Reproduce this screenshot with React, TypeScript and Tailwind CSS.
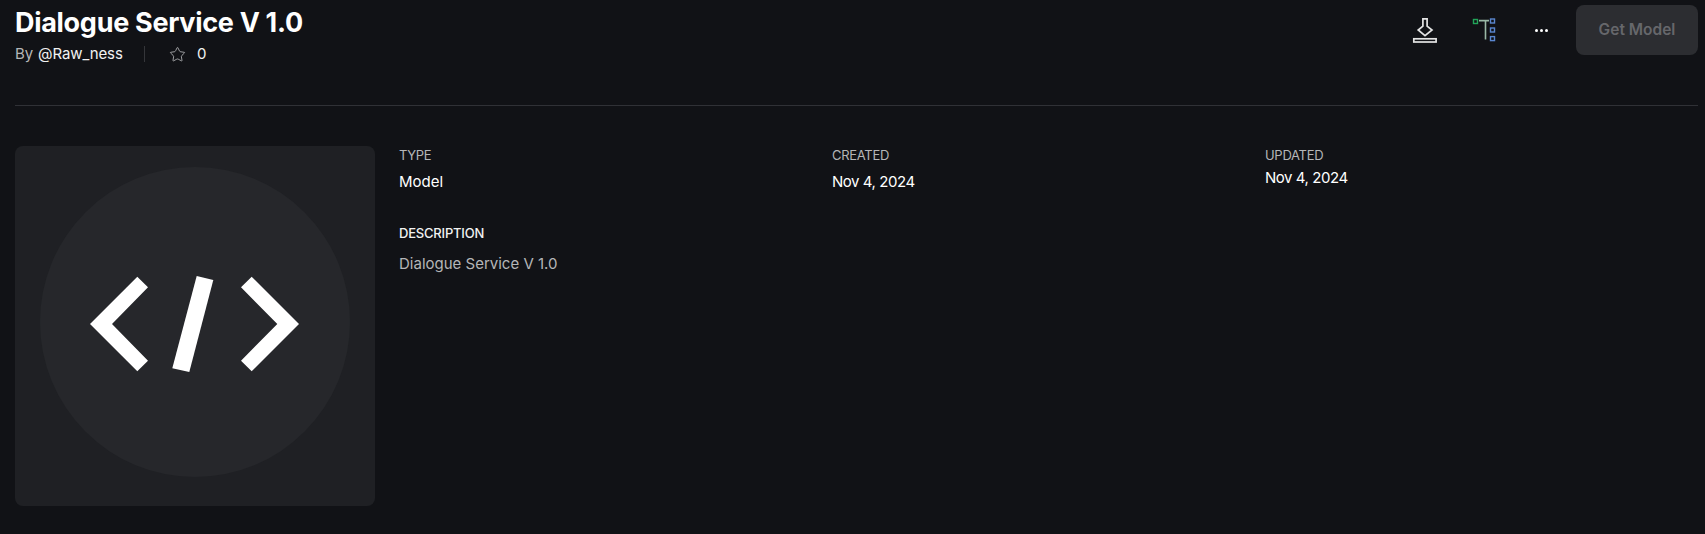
import { Star } from "lucide-react"

const meta = [
  { label: "TYPE", value: "Model", cls: "mt-[8px]" },
  { label: "CREATED", value: "Nov 4, 2024", cls: "mt-[8px] tracking-[-0.45px]" },
  { label: "UPDATED", value: "Nov 4, 2024", cls: "mt-[4px] tracking-[-0.45px]" },
]

function DownloadIcon() {
  return (
    <svg width="26" height="26" viewBox="0 0 26 26" fill="none" stroke="#e4e4e4" strokeWidth="1.7">
      <path d="M10.9 1.9h4.2v7.2L20 13 13 18.6 6.2 13l4.7-3.9z" />
      <rect x="1.8" y="21.8" width="22.3" height="3.2" />
    </svg>
  )
}

function TreeIcon() {
  return (
    <svg width="26" height="26" viewBox="0 0 26 26" fill="none">
      <rect x="2.5" y="2.5" width="4" height="4" stroke="#22a559" strokeWidth="1.4" />
      <path d="M8 3.6h10M14.5 3.6v19" stroke="#9ab8a6" strokeWidth="1.6" />
      <rect x="19.5" y="2" width="4" height="4" stroke="#5a86cf" strokeWidth="1.4" />
      <rect x="19.5" y="11" width="4" height="4" stroke="#5a86cf" strokeWidth="1.4" />
      <rect x="19.5" y="19.6" width="4" height="4" stroke="#5a86cf" strokeWidth="1.4" />
    </svg>
  )
}

function CodeThumb() {
  return (
    <svg viewBox="0 0 360 360" className="h-full w-full">
      <circle cx="180" cy="176" r="155" fill="#26272b" />
      <g fill="#ffffff">
        <polygon points="75,178 122.3,130.7 133,141.3 97,178 133,214.7 122.3,225.3" />
        <polygon points="284,178 236.7,130.7 226,141.3 262.3,178 226,214.7 236.7,225.3" />
        <polygon points="181.7,130 198.3,134 174.3,226 157.3,222.3" />
      </g>
    </svg>
  )
}

export default function App() {
  return (
    <div className="h-[534px] w-[1705px] overflow-hidden bg-[#111216] pt-[5px] pr-[7px] pl-[15px] font-['Inter',sans-serif] text-white">
      <div className="flex items-start justify-between border-b border-[#303136] pb-[41px]">
        <div>
          <h1 className="text-[27px] leading-[36px] font-bold tracking-[-0.3px]">Dialogue Service V 1.0</h1>
          <div className="mt-[3px] flex items-center text-[15px] leading-[20px] tracking-[-0.1px]">
            <span className="text-[#b5b6b8]">By</span>
            <span className="ml-[5px] w-[106px] text-[#f2f2f2]">@Raw_ness</span>
            <span className="h-[16px] w-px bg-[#35363a]" />
            <Star size={17} strokeWidth={1.2} className="ml-[24px] text-[#b5b6b8]" />
            <span className="ml-[11px] text-[#f2f2f2]">0</span>
          </div>
        </div>
        <div className="flex items-center">
          <button className="flex h-[50px] w-[26px] items-center justify-center">
            <DownloadIcon />
          </button>
          <button className="ml-[33px] flex h-[50px] w-[26px] items-center justify-center">
            <TreeIcon />
          </button>
          <button className="ml-[36px] flex h-[50px] w-[16px] items-center justify-center gap-[2px]">
            <span className="h-[3px] w-[3px] rounded-full bg-white" />
            <span className="h-[3px] w-[3px] rounded-full bg-white" />
            <span className="h-[3px] w-[3px] rounded-full bg-white" />
          </button>
          <button className="ml-[27px] h-[50px] w-[122px] rounded-[8px] bg-[#2c2d31] text-[15.5px] font-semibold text-[#66676b]">
            Get Model
          </button>
        </div>
      </div>

      <div className="mt-[40px] flex">
        <div className="h-[360px] w-[360px] shrink-0 rounded-[8px] bg-[#1f2024]">
          <CodeThumb />
        </div>
        <div className="ml-[24px] w-[1299px]">
          <div className="grid grid-cols-3">
            {meta.map((m) => (
              <div key={m.label}>
                <div className="text-[13px] leading-[18px] tracking-[-0.3px] text-[#b5b6b8]">{m.label}</div>
                <div className={`${m.cls} text-[15px] leading-[20px] text-white`}>{m.value}</div>
              </div>
            ))}
          </div>
          <div className="mt-[32px] text-[13px] leading-[18px] font-medium tracking-[-0.2px] text-[#f2f2f2]">DESCRIPTION</div>
          <div className="mt-[12px] text-[15px] leading-[20px] text-[#b5b6b8]">Dialogue Service V 1.0</div>
        </div>
      </div>
    </div>
  )
}
